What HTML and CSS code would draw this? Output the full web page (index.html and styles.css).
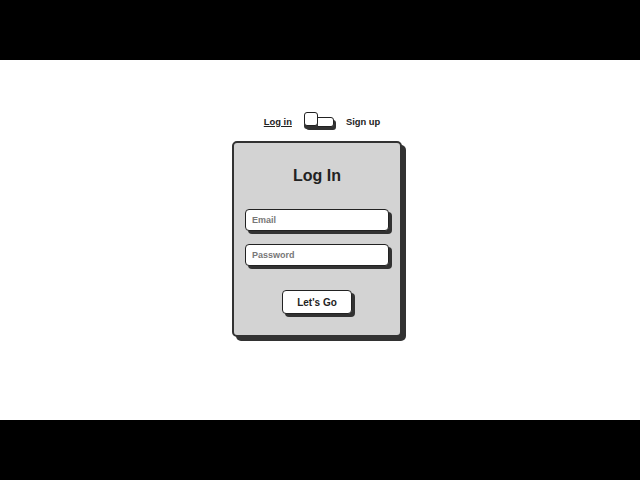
FILE: index.html
```html
<!DOCTYPE html>
<html lang="en">
<head>
<meta charset="utf-8">
<title>Log In</title>
<link rel="stylesheet" href="styles.css">
</head>
<body>
<div class="bar"></div>
<main class="stage">
  <div class="wrapper">
    <div class="toggle-row">
      <span class="label active">Log in</span>
      <span class="switch"><span class="track"></span><span class="knob"></span></span>
      <span class="label">Sign up</span>
    </div>
    <form class="card">
      <h1 class="title">Log In</h1>
      <input class="field" type="email" placeholder="Email">
      <input class="field field-last" type="password" placeholder="Password">
      <button class="btn" type="button">Let's Go</button>
    </form>
  </div>
</main>
<div class="bar"></div>
</body>
</html>
```

FILE: styles.css
```css
* { box-sizing: border-box; }
html, body { margin: 0; padding: 0; background: #fff; }
body { font-family: "Liberation Sans", Arial, sans-serif; color: #222; }

.bar { height: 60px; background: #000; }

.stage {
  height: 360px;
  display: flex;
  justify-content: center;
  padding-top: 52px;
}
.wrapper {
  width: 170px;
  margin-right: 6px;
  display: flex;
  flex-direction: column;
}

.toggle-row {
  display: flex;
  justify-content: center;
  align-items: flex-end;
  height: 15px;
  margin-bottom: 14px;
  padding-left: 10px;
  gap: 12px;
}
.label {
  font-size: 9.4px;
  line-height: 11px;
  font-weight: 700;
  color: #222;
  white-space: nowrap;
}
.label.active { text-decoration: underline; }

.switch {
  position: relative;
  display: block;
  width: 30px;
  height: 15px;
  padding-top: 5px;
}
.track {
  display: block;
  width: 30px;
  height: 10px;
  border: 1.5px solid #222;
  border-radius: 3px;
  background: #fff;
  box-shadow: 2px 3px 0 #323232;
}
.knob {
  position: absolute;
  top: 0;
  left: 0;
  width: 14px;
  height: 14px;
  border: 1.5px solid #222;
  border-radius: 3px;
  background: #fff;
  box-shadow: 0 3px 0 #323232;
}

.card {
  width: 170px;
  margin: 0;
  border: 2px solid #323232;
  border-radius: 5px;
  background: #d3d3d3;
  box-shadow: 4px 4px 0 #323232;
  padding: 24px 11px 21px;
  display: flex;
  flex-direction: column;
  align-items: center;
}
.title {
  margin: 0 0 24px;
  font-size: 16px;
  line-height: 18px;
  font-weight: 700;
  color: #222;
}
.field {
  display: block;
  width: 100%;
  height: 22px;
  margin: 0 0 13px;
  border: 1.5px solid #222;
  border-radius: 4px;
  background: #fff;
  box-shadow: 3px 3px 0 #323232;
  padding: 0 6px;
  font-family: "Liberation Sans", Arial, sans-serif;
  font-size: 9px;
  font-weight: 700;
  color: #222;
  outline: none;
}
.field::placeholder { color: #777; opacity: 1; }
.field-last { margin-bottom: 24px; }

.btn {
  width: 70px;
  height: 24px;
  border: 1.5px solid #222;
  border-radius: 4px;
  background: #fff;
  box-shadow: 3px 3px 0 #323232;
  padding: 0;
  font-family: "Liberation Sans", Arial, sans-serif;
  font-size: 10px;
  font-weight: 700;
  color: #222;
}
```
